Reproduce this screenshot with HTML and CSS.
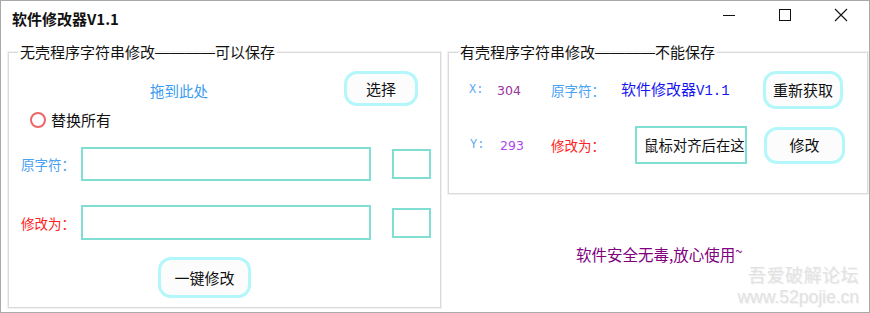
FILE: index.html
```html
<!DOCTYPE html>
<html lang="zh-CN">
<head>
<meta charset="utf-8">
<title>软件修改器V1.1</title>
<link rel="stylesheet" href="styles.css">
</head>
<body>
<div class="window">
  <div class="titlebar">
    <div class="title">软件修改器V1.1</div>
    <div class="controls">
      <div class="ctl"><svg width="14" height="14" viewBox="0 0 14 14"><path d="M1 7.5H13" stroke="#111" stroke-width="1"/></svg></div>
      <div class="ctl"><svg width="14" height="14" viewBox="0 0 14 14"><rect x="1.5" y="1.5" width="11" height="11" fill="none" stroke="#111" stroke-width="1"/></svg></div>
      <div class="ctl"><svg width="14" height="14" viewBox="0 0 14 14"><path d="M1 1L13 13M13 1L1 13" stroke="#111" stroke-width="1.1"/></svg></div>
    </div>
  </div>
  <div class="main">
    <fieldset class="group group-left">
      <legend class="legend">无壳程序字符串修改<span class="dash">————</span>可以保存</legend>
      <div class="drop-row">
        <span class="drop-text">拖到此处</span>
        <button class="btn btn-select">选择</button>
      </div>
      <div class="radio-row">
        <span class="radio"></span>
        <span class="radio-text">替换所有</span>
      </div>
      <div class="field-row field-row-1">
        <span class="lbl lbl-blue">原字符：</span>
        <div class="input input-1"></div>
        <div class="mini"></div>
      </div>
      <div class="field-row field-row-2">
        <span class="lbl lbl-red">修改为：</span>
        <div class="input input-2"></div>
        <div class="mini"></div>
      </div>
      <div class="apply-row">
        <button class="btn btn-apply">一键修改</button>
      </div>
    </fieldset>
    <div class="right-col">
      <fieldset class="group group-right">
        <legend class="legend">有壳程序字符串修改<span class="dash">————</span>不能保存</legend>
        <div class="r-row r-row-1">
          <span class="coord coord-x">X:</span>
          <span class="num num-x">304</span>
          <span class="rlbl rlbl-blue">原字符：</span>
          <span class="orig">软件修改器<span class="mono">V1.1</span></span>
          <button class="btn btn-refresh">重新获取</button>
        </div>
        <div class="r-row r-row-2">
          <span class="coord coord-y">Y:</span>
          <span class="num num-y">293</span>
          <span class="rlbl rlbl-red">修改为：</span>
          <div class="r-input"><span class="r-input-text">鼠标对齐后在这</span></div>
          <button class="btn btn-modify">修改</button>
        </div>
      </fieldset>
      <div class="safe">软件安全无毒,放心使用<span class="tilde">~</span></div>
    </div>
  </div>
  <div class="watermark">
    <div class="wm-cn">吾爱破解论坛</div>
    <div class="wm-en">www.52pojie.cn</div>
  </div>
</div>
</body>
</html>
```
FILE: styles.css
```css
* { box-sizing: border-box; }
html, body { margin: 0; padding: 0; background: #fff; }
body {
  font-family: "Noto Sans CJK SC", "Microsoft YaHei", sans-serif;
  font-size: 15px;
  color: #111;
}
.window {
  position: relative;
  width: 870px;
  height: 313px;
  border: 1px solid #a9a9a9;
  background: #fff;
  overflow: hidden;
}
.titlebar {
  height: 41px;
  display: flex;
  justify-content: space-between;
  align-items: flex-start;
}
.title {
  padding: 8px 0 0 11px;
  font-weight: bold;
  font-size: 15px;
  line-height: 20px;
  color: #111;
}
.controls { display: flex; }
.ctl {
  width: 56px;
  height: 28px;
  display: flex;
  align-items: center;
  justify-content: center;
}
.main {
  display: flex;
  align-items: flex-start;
  gap: 7px;
  padding-left: 7px;
}
.group {
  margin: 0;
  padding: 0;
  min-width: 0;
  border: 1px solid #dadada;
  box-shadow: 0 0 0 1px #f1f1f1;
}
.group-left { width: 433px; height: 266px; }
.group-right { width: 420px; height: 152px; }
.legend {
  margin-left: 9px;
  padding: 0 2px;
  font-size: 15px;
  line-height: 20px;
  color: #111;
}
.dash {
  font-family: "Liberation Sans", sans-serif;
  font-size: 15px;
  display: inline-block;
  vertical-align: 1px;
}
.btn {
  font-family: "Noto Sans CJK SC", sans-serif;
  font-size: 15px;
  line-height: 20px;
  color: #111;
  background: #fcfcfc;
  border: 3px solid #b3f7fb;
  border-radius: 13px;
  padding: 0;
  display: flex;
  align-items: center;
  justify-content: center;
}
.drop-row {
  display: flex;
  align-items: center;
  margin-top: 9px;
  padding-left: 141px;
}
.drop-text {
  width: 194px;
  padding-top: 5px;
  color: #3a9cf2;
  font-size: 14.5px;
  line-height: 20px;
}
.btn-select { width: 74px; height: 35px; }
.radio-row {
  display: flex;
  align-items: center;
  gap: 5px;
  margin-top: 5px;
  padding-left: 21px;
  height: 18px;
}
.radio {
  width: 16px;
  height: 16px;
  border-radius: 50%;
  border: 2.5px solid #e96767;
  background: #fff;
}
.radio-text { font-size: 15px; line-height: 18px; }
.field-row {
  display: flex;
  align-items: center;
  padding-left: 12px;
}
.field-row-1 { margin-top: 18px; }
.field-row-2 { margin-top: 24px; }
.lbl {
  width: 60px;
  font-size: 13.5px;
  line-height: 20px;
}
.lbl-blue { color: #4ba2ef; }
.lbl-red { color: #ff2424; }
.input {
  width: 290px;
  border: 2px solid #80ded2;
  background: #fff;
}
.input-1 { height: 34px; }
.input-2 { height: 35px; }
.mini {
  width: 39px;
  height: 30px;
  margin-left: 21px;
  border: 2px solid #80ded2;
}
.apply-row {
  margin-top: 17px;
  padding-left: 149px;
}
.btn-apply { width: 93px; height: 41px; }
.right-col {
  display: flex;
  flex-direction: column;
}
.r-row {
  display: flex;
  align-items: center;
}
.r-row-1 { margin-top: 9px; padding-left: 20px; }
.r-row-2 { margin-top: 17px; padding-left: 21px; }
.coord {
  font-family: "Liberation Mono", "DejaVu Sans Mono", monospace;
  font-size: 12px;
  color: #5aa8f2;
}
.coord-x { width: 28px; }
.coord-y { width: 30px; }
.num {
  font-family: "DejaVu Sans", sans-serif;
  font-size: 12.5px;
}
.num-x { width: 54px; color: #98329a; }
.num-y { width: 51px; color: #b048e6; }
.rlbl { font-size: 13.5px; line-height: 20px; }
.r-row-1 .rlbl { width: 70px; }
.r-row-2 .rlbl { width: 84px; }
.rlbl-blue { color: #4ba2f2; }
.rlbl-red { color: #ff2424; }
.orig {
  width: 142px;
  color: #1515f2;
  font-size: 15px;
  line-height: 20px;
}
.mono {
  font-family: "Liberation Mono", monospace;
  font-size: 14px;
}
.btn-refresh { width: 80px; height: 38px; }
.r-input {
  width: 112px;
  height: 38px;
  border: 2px solid #80ded2;
  overflow: hidden;
  white-space: nowrap;
  display: flex;
  align-items: center;
  padding-left: 7px;
}
.r-input-text { font-size: 14.4px; line-height: 20px; color: #111; }
.btn-modify { width: 81px; height: 37px; margin-left: 17px; }
.safe {
  margin-top: 47px;
  padding-left: 128px;
  font-size: 15.5px;
  line-height: 20px;
  color: #800080;
}
.tilde {
  display: inline-block;
  vertical-align: 5px;
  font-size: 13px;
}
.watermark {
  position: absolute;
  right: 10px;
  bottom: 4px;
  color: #e2e2e2;
  text-shadow: 1px 1px 0 #f3f3f3;
  text-align: right;
}
.wm-cn { font-size: 18px; line-height: 24px; letter-spacing: 0.5px; }
.wm-en { font-family: "Liberation Sans", sans-serif; font-size: 17.5px; line-height: 22px; }
```
